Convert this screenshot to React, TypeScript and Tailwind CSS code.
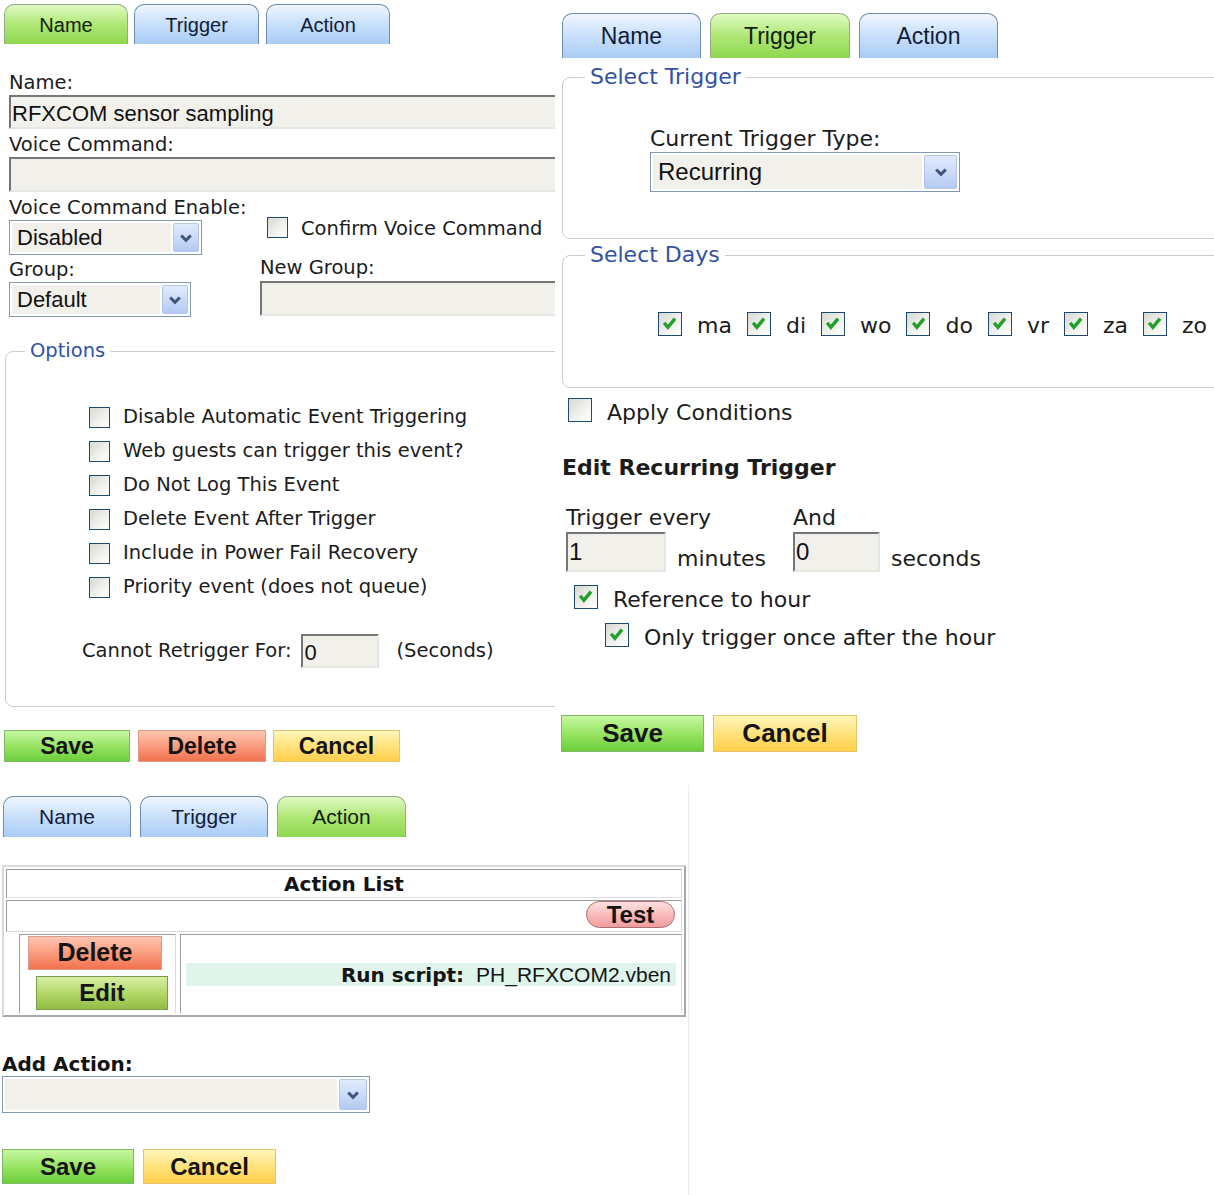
import React from 'react';

const V = "font-['DejaVu_Sans',Verdana,sans-serif]";
const T = "font-['Liberation_Sans',Arial,sans-serif]";

const TONES: Record<string, string> = {
  green: 'bg-linear-to-b from-[#c6f8a0] via-[#98e463] to-[#6cce3a] border-[#7fb866]',
  red: 'bg-linear-to-b from-[#ffc6b2] via-[#fa9c7e] to-[#f2714d] border-[#d99c8c]',
  yellow: 'bg-linear-to-b from-[#fff6b8] via-[#ffe27c] to-[#ffcf48] border-[#e4c470]',
  olive: 'bg-linear-to-b from-[#d8eea4] via-[#b4d868] to-[#94bd44] border-[#7c9a4e]',
  pink: 'bg-linear-to-b from-[#ffe0e0] via-[#f8bcbc] to-[#f09c9c] border-[#a87070]',
};

function Tab({ label, active, className }: { label: string; active?: boolean; className: string }) {
  return (
    <div
      className={`${className} ${T} rounded-t-[10px] border border-b-0 flex items-center justify-center ${
        active
          ? 'bg-linear-to-b from-[#e0f9c0] via-[#aee774] to-[#90d84f] border-[#97aa88] text-[#0f200f]'
          : 'bg-linear-to-b from-[#f0f6fe] via-[#c8dffa] to-[#a9ccf6] border-[#6f8ca8] text-[#101d38]'
      }`}
    >
      {label}
    </div>
  );
}

function Btn({ label, tone, className }: { label: string; tone: string; className: string }) {
  return (
    <div className={`${className} ${TONES[tone]} ${T} border font-bold text-[#141414] flex items-center justify-center`}>
      {label}
    </div>
  );
}

function Check({ checked, big }: { checked?: boolean; big?: boolean }) {
  return (
    <span
      className={`${big ? 'w-[24px] h-[24px]' : 'w-[21px] h-[21px]'} shrink-0 border border-[#1f4a70] bg-linear-to-br from-[#d9d9d3] via-[#eeeeea] to-white flex items-center justify-center`}
    >
      {checked && (
        <svg viewBox="0 0 12 12" className="w-[78%] h-[78%]">
          <path d="M2.2 5.4 L4.8 8.6 L9.8 2.6" stroke="#22a02b" strokeWidth="2.4" fill="none" />
        </svg>
      )}
    </span>
  );
}

function Input({ value, className }: { value?: string; className: string }) {
  return (
    <div
      className={`${className} ${T} shrink-0 bg-[#f1f0eb] border-2 border-t-[#767676] border-l-[#767676] border-b-[#e6e6e2] border-r-[#e6e6e2] flex items-center pl-[1px] text-[#111] overflow-hidden whitespace-nowrap`}
    >
      {value}
    </div>
  );
}

function Select({ value, className, arrow }: { value?: string; className: string; arrow: string }) {
  return (
    <div className={`${className} ${T} shrink-0 border border-[#8098b4] bg-white p-[2px] flex text-[#111]`}>
      <div className="flex-1 bg-[#f1f0ea] flex items-center pl-[5px] whitespace-nowrap overflow-hidden">{value}</div>
      <div
        className={`${arrow} ml-[2px] rounded-[2px] border border-[#b2c5ec] bg-linear-to-b from-[#e2ebfc] to-[#b4caf3] flex items-center justify-center`}
      >
        <svg viewBox="0 0 10 10" className="w-[14px] h-[14px]">
          <path d="M1.6 3.2 L5 6.6 L8.4 3.2" stroke="#42557c" strokeWidth="2.2" fill="none" />
        </svg>
      </div>
    </div>
  );
}

function Label({ children, className = '' }: { children: React.ReactNode; className?: string }) {
  return <div className={`${className} h-[24px] leading-[24px] whitespace-nowrap`}>{children}</div>;
}

function NamePanel() {
  const options = [
    'Disable Automatic Event Triggering',
    'Web guests can trigger this event?',
    'Do Not Log This Event',
    'Delete Event After Trigger',
    'Include in Power Fail Recovery',
    'Priority event (does not queue)',
  ];
  return (
    <div className={`w-[555px] h-[785px] overflow-hidden shrink-0 ${V} text-[19.5px] text-[#1c1c1c]`}>
      <div className="flex pt-[4px] pl-[4px] text-[20px]">
        <Tab label="Name" active className="w-[124px] h-[40px]" />
        <Tab label="Trigger" className="w-[125px] h-[40px] ml-[6px]" />
        <Tab label="Action" className="w-[124px] h-[40px] ml-[7px]" />
      </div>

      <div className="pl-[9px] mt-[27px]">
        <Label>Name:</Label>
        <Input value="RFXCOM sensor sampling" className="w-[560px] h-[34px] text-[22px] pt-[3px]" />
        <Label className="mt-[4px]">Voice Command:</Label>
        <Input className="w-[560px] h-[35px]" />
      </div>

      <div className="flex pl-[9px] mt-[4px]">
        <div className="w-[251px] shrink-0">
          <Label>Voice Command Enable:</Label>
          <Select value="Disabled" className="w-[193px] h-[35px] text-[22px]" arrow="w-[26px]" />
          <Label className="mt-[3px]">Group:</Label>
          <Select value="Default" className="w-[182px] h-[35px] text-[22px]" arrow="w-[26px]" />
        </div>
        <div>
          <div className="flex items-center gap-[13px] mt-[21px] ml-[7px] h-[21px]">
            <Check />
            <span className="whitespace-nowrap pt-[3px]">Confirm Voice Command</span>
          </div>
          <Label className="mt-[18px]">New Group:</Label>
          <Input className="w-[300px] h-[35px] mt-[1px]" />
        </div>
      </div>

      <fieldset className="ml-[5px] mt-[22px] w-[600px] border border-[#cdcdcd] rounded-[8px] p-0">
        <legend className="ml-[19px] px-[5px] h-[24px] leading-[24px] text-[#3152a3]">Options</legend>
        <div className="pt-[37px] pl-[76px] pb-[38px]">
          {options.map((o) => (
            <div key={o} className="h-[34px] flex items-center gap-[13px] pl-[7px]">
              <Check />
              <span className="whitespace-nowrap">{o}</span>
            </div>
          ))}
          <div className="flex items-center mt-[30px]">
            <span className="whitespace-nowrap">Cannot Retrigger For:</span>
            <Input value="0" className="w-[78px] h-[34px] ml-[10px] text-[22px] items-start" />
            <span className="ml-[17px]">(Seconds)</span>
          </div>
        </div>
      </fieldset>

      <div className="flex pl-[4px] mt-[23px] text-[23px]">
        <Btn label="Save" tone="green" className="w-[126px] h-[32px]" />
        <Btn label="Delete" tone="red" className="w-[128px] h-[32px] ml-[8px]" />
        <Btn label="Cancel" tone="yellow" className="w-[127px] h-[32px] ml-[7px]" />
      </div>
    </div>
  );
}

function TriggerPanel() {
  const days = ['ma', 'di', 'wo', 'do', 'vr', 'za', 'zo'];
  return (
    <div className={`w-[659px] h-[785px] overflow-hidden shrink-0 ${V} text-[22px] text-[#1c1c1c]`}>
      <div className="flex pt-[13px] pl-[7px] text-[23px]">
        <Tab label="Name" className="w-[139px] h-[45px]" />
        <Tab label="Trigger" active className="w-[140px] h-[45px] ml-[9px]" />
        <Tab label="Action" className="w-[139px] h-[45px] ml-[9px]" />
      </div>

      <fieldset className="ml-[7px] mt-[6px] w-[700px] border border-[#cdcdcd] rounded-[8px] p-0">
        <legend className="ml-[22px] px-[5px] h-[26px] leading-[26px] text-[#3152a3]">Select Trigger</legend>
        <div className="pt-[36px] pl-[87px] pb-[46px]">
          <div className="h-[26px] leading-[26px] whitespace-nowrap">Current Trigger Type:</div>
          <Select value="Recurring" className="w-[310px] h-[40px] text-[24px]" arrow="w-[33px]" />
        </div>
      </fieldset>

      <fieldset className="ml-[7px] mt-[3px] w-[700px] border border-[#cdcdcd] rounded-[8px] p-0">
        <legend className="ml-[22px] px-[5px] h-[26px] leading-[26px] text-[#3152a3]">Select Days</legend>
        <div className="pt-[44px] pl-[95px] pb-[51px] flex gap-[15px]">
          {days.map((d) => (
            <div key={d} className="flex items-center gap-[15px] h-[24px]">
              <Check checked big />
              <span className="pt-[2px]">{d}</span>
            </div>
          ))}
        </div>
      </fieldset>

      <div className="flex items-center gap-[15px] mt-[10px] ml-[13px] h-[24px]">
        <Check big />
        <span className="pt-[4px]">Apply Conditions</span>
      </div>

      <div className="mt-[33px] ml-[7px] h-[26px] leading-[26px] font-bold">Edit Recurring Trigger</div>

      <div className="flex mt-[24px] ml-[11px]">
        <div className="w-[227px]">
          <div className="h-[26px] leading-[26px]">Trigger every</div>
          <div className="flex items-end mt-[1px]">
            <Input value="1" className="w-[100px] h-[40px] text-[24px] items-start" />
            <span className="ml-[11px] leading-[26px]">minutes</span>
          </div>
        </div>
        <div>
          <div className="h-[26px] leading-[26px]">And</div>
          <div className="flex items-end mt-[1px]">
            <Input value="0" className="w-[87px] h-[40px] text-[24px] items-start" />
            <span className="ml-[11px] leading-[26px]">seconds</span>
          </div>
        </div>
      </div>

      <div className="flex items-center gap-[15px] mt-[13px] ml-[19px] h-[24px]">
        <Check checked big />
        <span className="pt-[4px]">Reference to hour</span>
      </div>
      <div className="flex items-center gap-[15px] mt-[14px] ml-[50px] h-[24px]">
        <Check checked big />
        <span className="pt-[5px]">Only trigger once after the hour</span>
      </div>

      <div className="flex ml-[6px] mt-[68px] text-[26px]">
        <Btn label="Save" tone="green" className="w-[143px] h-[37px]" />
        <Btn label="Cancel" tone="yellow" className="w-[144px] h-[37px] ml-[9px]" />
      </div>
    </div>
  );
}

function ActionPanel() {
  const cell = 'border border-t-[#9c9c9c] border-l-[#9c9c9c] border-b-[#dcdcdc] border-r-[#dcdcdc]';
  return (
    <div className={`w-[689px] h-[410px] border-r border-[#ececec] ${V} text-[20px] text-[#141414]`}>
      <div className="flex pt-[11px] pl-[3px] text-[21px]">
        <Tab label="Name" className="w-[128px] h-[41px]" />
        <Tab label="Trigger" className="w-[128px] h-[41px] ml-[9px]" />
        <Tab label="Action" active className="w-[129px] h-[41px] ml-[9px]" />
      </div>

      <div className="ml-[2px] mt-[28px] w-[684px] h-[152px] border-2 border-t-[#dadada] border-l-[#dadada] border-b-[#a9a9a9] border-r-[#a9a9a9] p-[2px] flex flex-col gap-[2px]">
        <div className={`${cell} h-[29px] flex items-center justify-center font-bold`}>Action List</div>
        <div className={`${cell} h-[32px] flex items-start justify-end pr-[6px]`}>
          <Btn label="Test" tone="pink" className="w-[89px] h-[27px] rounded-full text-[24px]" />
        </div>
        <div className="flex flex-1 pl-[13px] gap-[4px]">
          <div className={`${cell} w-[157px] border-b-0 border-r-[#cfcfcf]`}>
            <Btn label="Delete" tone="red" className="w-[134px] h-[34px] ml-[8px] mt-[1px] text-[25px]" />
            <Btn label="Edit" tone="olive" className="w-[132px] h-[34px] ml-[16px] mt-[6px] text-[24px]" />
          </div>
          <div className={`${cell} flex-1 border-b-0`}>
            <div className="mx-[5px] mt-[28px] h-[23px] bg-[#dff4ea] flex items-center justify-end pr-[5px] whitespace-nowrap">
              <span className="font-bold">Run script:</span>
              <span className={`${T} text-[21px] ml-[12px]`}>PH_RFXCOM2.vben</span>
            </div>
          </div>
        </div>
      </div>

      <div className="ml-[2px] mt-[35px] h-[24px] leading-[24px] font-bold">Add Action:</div>
      <Select className="ml-[2px] w-[368px] h-[37px]" arrow="w-[28px]" />

      <div className="flex ml-[2px] mt-[36px] text-[24px]">
        <Btn label="Save" tone="green" className="w-[132px] h-[35px]" />
        <Btn label="Cancel" tone="yellow" className="w-[133px] h-[35px] ml-[9px]" />
      </div>
    </div>
  );
}

export default function App() {
  return (
    <div className="w-[1214px] h-[1195px] bg-white overflow-hidden">
      <div className="flex">
        <NamePanel />
        <TriggerPanel />
      </div>
      <ActionPanel />
    </div>
  );
}
